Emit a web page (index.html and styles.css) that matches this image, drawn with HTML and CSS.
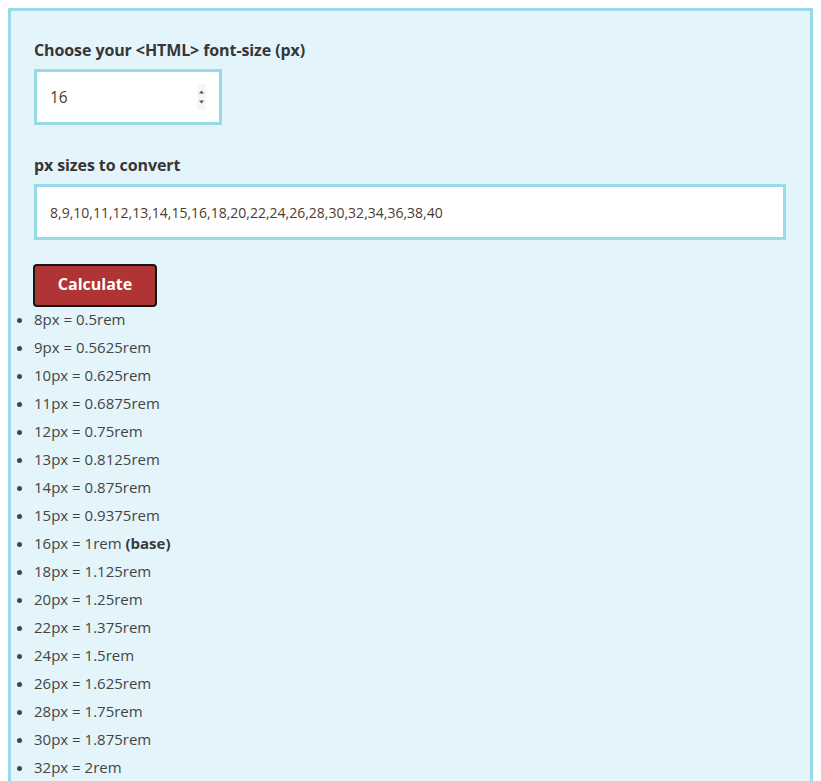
FILE: index.html
```html
<!DOCTYPE html>
<html lang="en">
<head>
<meta charset="utf-8">
<title>px to rem converter</title>
<link rel="stylesheet" href="styles.css">
</head>
<body>
<div class="panel">
  <div class="field">
    <label class="label" for="base">Choose your &lt;HTML&gt; font-size (px)</label>
    <input class="input input-number" id="base" type="number" value="16">
  </div>
  <div class="field">
    <label class="label" for="sizes">px sizes to convert</label>
    <input class="input input-text" id="sizes" type="text" value="8,9,10,11,12,13,14,15,16,18,20,22,24,26,28,30,32,34,36,38,40">
  </div>
  <button class="btn" type="button">Calculate</button>
  <ul class="results">
    <li>8px = 0.5rem</li>
    <li>9px = 0.5625rem</li>
    <li>10px = 0.625rem</li>
    <li>11px = 0.6875rem</li>
    <li>12px = 0.75rem</li>
    <li>13px = 0.8125rem</li>
    <li>14px = 0.875rem</li>
    <li>15px = 0.9375rem</li>
    <li>16px = 1rem <strong>(base)</strong></li>
    <li>18px = 1.125rem</li>
    <li>20px = 1.25rem</li>
    <li>22px = 1.375rem</li>
    <li>24px = 1.5rem</li>
    <li>26px = 1.625rem</li>
    <li>28px = 1.75rem</li>
    <li>30px = 1.875rem</li>
    <li>32px = 2rem</li>
    <li>34px = 2.125rem</li>
    <li>36px = 2.25rem</li>
    <li>38px = 2.375rem</li>
    <li>40px = 2.5rem</li>
  </ul>
</div>
</body>
</html>
```
FILE: styles.css
```css
html, body {
  background: #ffffff;
}
body {
  margin: 8px;
  font-family: "Open Sans", "Noto Sans", sans-serif;
  font-size: 16px;
  color: #444444;
}
.panel {
  background: #e3f5fa;
  border: 3px solid #98dae8;
  padding: 27px 24px 24px 23px;
}
.field {
  display: flex;
  flex-direction: column;
  align-items: flex-start;
  margin-bottom: 28px;
}
.field + .field {
  margin-bottom: 24px;
}
.label {
  font-weight: 700;
  font-size: 16px;
  line-height: 24px;
  letter-spacing: -0.1px;
  color: #363636;
  margin-bottom: 7px;
}
.input {
  box-sizing: border-box;
  height: 56px;
  border: 3px solid #98dae8;
  background: #ffffff;
  padding: 0 13px;
  font-family: inherit;
  font-size: 14px;
  color: #4d3b30;
  outline: none;
}
.input-number {
  width: 188px;
  font-size: 15.5px;
}
.input-number::-webkit-inner-spin-button {
  -webkit-appearance: none;
  appearance: none;
  opacity: 1;
  width: 9px;
  height: 26px;
  margin: 0;
  background: #f6f6f6 url("data:image/svg+xml,%3Csvg xmlns='http://www.w3.org/2000/svg' width='9' height='26' viewBox='0 0 9 26'%3E%3Cpath d='M2 9.5h5L4.5 6.5z' fill='%23555'/%3E%3Cpath d='M2 16.5h5L4.5 19.5z' fill='%23555'/%3E%3C/svg%3E") no-repeat center;
}
.input-text {
  width: 100%;
}
.btn {
  display: block;
  box-sizing: border-box;
  width: 124px;
  height: 43px;
  margin-left: -1px;
  background: #b03434;
  border: 2px solid #161616;
  border-radius: 4px;
  color: #ffffff;
  font-family: inherit;
  font-weight: 700;
  font-size: 16px;
  padding: 0 0 3px;
}
.results {
  margin: 0;
  padding: 0;
  list-style: disc outside;
}
.results li {
  font-size: 15px;
  line-height: 24px;
  margin-bottom: 4px;
}
.results strong {
  font-weight: 700;
  color: #3a3a3a;
}
```
